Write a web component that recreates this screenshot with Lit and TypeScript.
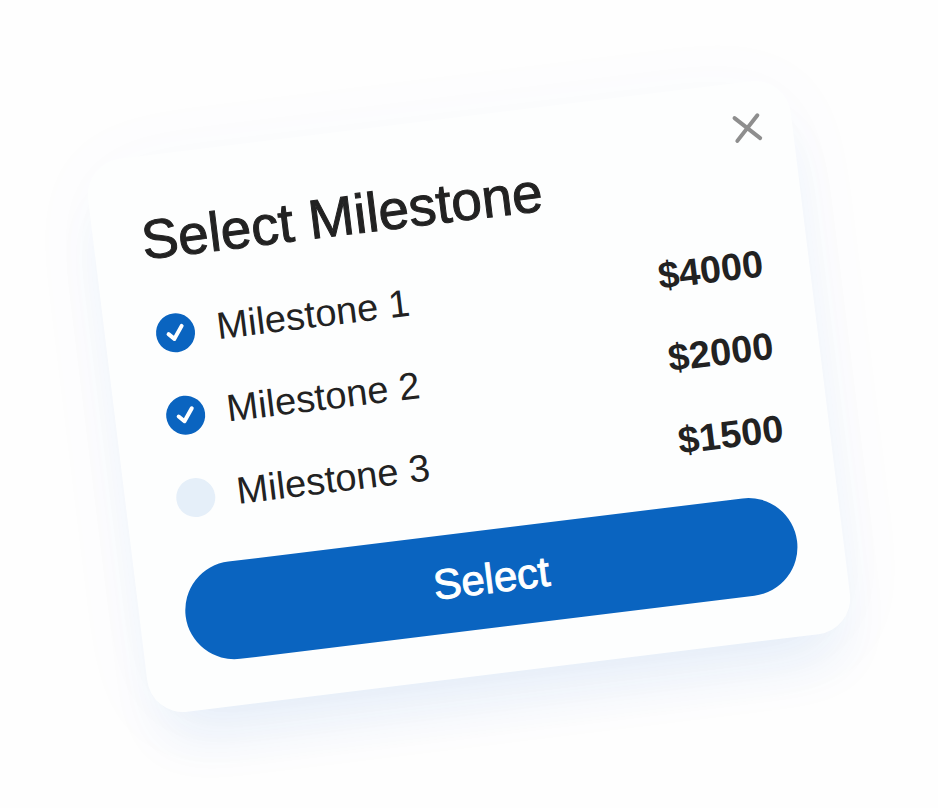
import { LitElement, html, css } from "lit";
import { customElement, state } from "lit/decorators.js";

interface Milestone {
  name: string;
  amount: string;
  selected: boolean;
}

@customElement("app-root")
export class AppRoot extends LitElement {
  static styles = css`
    :host {
      display: flex;
      align-items: center;
      justify-content: center;
      box-sizing: border-box;
      min-height: 100vh;
      padding: 16px 16px 32px;
      overflow: hidden;
      background: #fefefe;
      color: #222;
      font-family: "Liberation Sans", Arial, sans-serif;
    }
    .card {
      position: relative;
      box-sizing: border-box;
      width: 100%;
      max-width: 708px;
      padding: 52px 46px 46px;
      border-radius: 36px;
      background: #fdfefe;
      box-shadow:
        0 40px 56px -16px rgba(20, 105, 200, 0.09),
        0 8px 88px rgba(40, 90, 220, 0.03);
      transform: rotate(-7deg);
    }
    .close {
      position: absolute;
      top: 31px;
      right: 30px;
      display: flex;
      padding: 0;
      border: 0;
      background: none;
      color: #8e8e8e;
      cursor: pointer;
    }
    .title {
      margin: 0 0 22px;
      padding-left: 2px;
      font-size: 55px;
      font-weight: 400;
      line-height: 64px;
      -webkit-text-stroke: 1px currentColor;
    }
    .list {
      margin: 0 0 26px;
      padding: 0;
      list-style: none;
    }
    .row {
      display: flex;
      align-items: center;
      height: 83px;
      padding-left: 5px;
    }
    .option {
      display: flex;
      flex: 1;
      align-items: center;
      gap: 22px;
      cursor: pointer;
    }
    .box {
      display: grid;
      width: 39px;
      height: 39px;
    }
    .box > * {
      grid-area: 1 / 1;
    }
    .tick {
      appearance: none;
      width: 39px;
      height: 39px;
      margin: 0;
      border-radius: 50%;
      background: #e5eff9;
      cursor: pointer;
    }
    .tick:checked {
      background: #0a64c0;
    }
    .mark {
      z-index: 1;
      visibility: hidden;
      pointer-events: none;
    }
    .tick:checked + .mark {
      visibility: visible;
    }
    .name {
      padding-bottom: 4px;
      font-size: 38px;
      line-height: 44px;
    }
    .amount {
      padding-top: 4px;
      font-size: 38px;
      font-weight: 700;
      line-height: 44px;
    }
    .select {
      display: block;
      width: 100%;
      height: 98px;
      padding: 0;
      border: 0;
      border-radius: 49px;
      background: #0a64c0;
      color: #fff;
      font: 400 42px / 48px "Liberation Sans", Arial, sans-serif;
      -webkit-text-stroke: 1px currentColor;
      cursor: pointer;
    }
  `;

  @state() private milestones: Milestone[] = [
    { name: "Milestone 1", amount: "$4000", selected: true },
    { name: "Milestone 2", amount: "$2000", selected: true },
    { name: "Milestone 3", amount: "$1500", selected: false },
  ];

  private toggle(index: number) {
    this.milestones = this.milestones.map((m, i) =>
      i === index ? { ...m, selected: !m.selected } : m
    );
  }

  private renderRow(m: Milestone, index: number) {
    return html`
      <li class="row">
        <label class="option">
          <span class="box">
            <input
              class="tick"
              type="checkbox"
              .checked=${m.selected}
              @change=${() => this.toggle(index)}
            />
            <svg class="mark" width="39" height="39" viewBox="0 0 39 39" fill="none" aria-hidden="true">
              <path
                d="M12.4 20 17.6 25.4 26.4 13.4"
                stroke="#fff"
                stroke-width="4"
                stroke-linecap="round"
                stroke-linejoin="round"
              />
            </svg>
          </span>
          <span class="name">${m.name}</span>
        </label>
        <span class="amount">${m.amount}</span>
      </li>
    `;
  }

  render() {
    return html`
      <section class="card" role="dialog" aria-labelledby="title">
        <button class="close" type="button" aria-label="Close">
          <svg width="30" height="30" viewBox="0 0 30 30" fill="none" aria-hidden="true">
            <path
              d="M3.5 3.5 26.5 26.5M26.5 3.5 3.5 26.5"
              stroke="currentColor"
              stroke-width="4"
              stroke-linecap="round"
            />
          </svg>
        </button>
        <h2 class="title" id="title">Select Milestone</h2>
        <ul class="list">
          ${this.milestones.map((m, i) => this.renderRow(m, i))}
        </ul>
        <button class="select" type="button">Select</button>
      </section>
    `;
  }
}
